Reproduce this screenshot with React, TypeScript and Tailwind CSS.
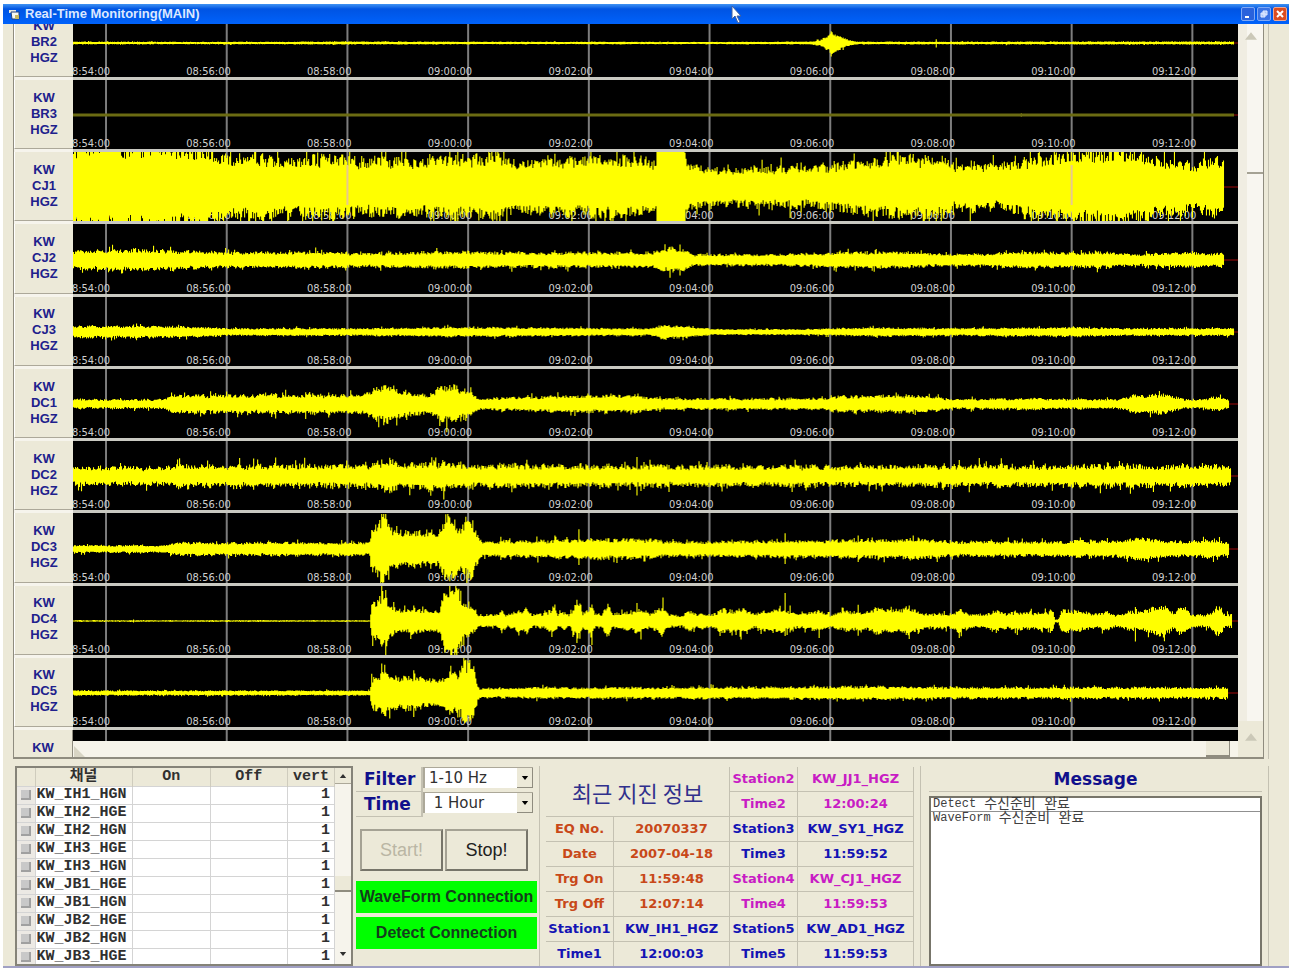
import { useState } from 'react';

type Point = [number, number];

interface IChannel {
  station: string;
  env: Point[];
  end: number;
  spikes?: Point[];
  rough?: number;
  color?: string;
  ghost?: boolean;
}

const PLOT_WIDTH = 1164;
const MID = 36;

const TICKS = [
  '08:54:00',
  '08:56:00',
  '08:58:00',
  '09:00:00',
  '09:02:00',
  '09:04:00',
  '09:06:00',
  '09:08:00',
  '09:10:00',
  '09:12:00',
];

const tickX = (i: number) => 33 + i * 120.6;
const pct = (x: number) => `${(x / PLOT_WIDTH) * 100}%`;

// env: [x, amplitude] key points of the envelope, spikes: single tall peaks
const channels: IChannel[] = [
  {
    station: 'BR2',
    end: 1160,
    env: [[0, 1.6], [110, 1.2], [270, 1.5], [620, 1.2], [735, 1.4], [745, 3], [753, 7], [758, 12], [763, 8], [770, 5], [782, 1.4], [1164, 1.6]],
    spikes: [[757, 15], [758, 14], [759, 12], [862, 4]],
  },
  { station: 'BR3', end: 1160, env: [[0, 1.4], [1164, 1.4]], rough: 0, color: '#6b6b12', spikes: [[947, 2]] },
  {
    station: 'CJ1',
    end: 1150,
    rough: 0.38,
    ghost: true,
    env: [[0, 50], [70, 48], [130, 42], [155, 36], [200, 33], [260, 33], [290, 29], [350, 31], [400, 35], [430, 37], [450, 28], [500, 31], [530, 34], [582, 29], [583, 60], [608, 60], [612, 30], [616, 22], [680, 21], [740, 22], [790, 27], [830, 32], [865, 33], [880, 25], [930, 23], [950, 31], [985, 38], [1020, 41], [1060, 38], [1090, 31], [1115, 25], [1130, 29], [1150, 31]],
    spikes: [[727, 30], [817, 32], [755, 28]],
  },
  {
    station: 'CJ2',
    end: 1150,
    env: [[0, 10], [60, 11], [100, 10], [160, 8], [240, 9], [290, 7], [380, 9], [440, 8], [580, 8], [595, 13], [610, 12], [620, 6], [700, 6], [760, 8], [830, 9], [880, 6], [940, 8], [1020, 9], [1070, 6], [1100, 8], [1150, 7]],
    spikes: [[24, 15], [100, 13]],
  },
  {
    station: 'CJ3',
    end: 1160,
    env: [[0, 6], [110, 6], [160, 4], [300, 4], [380, 5], [580, 4], [588, 8], [600, 7], [640, 3], [720, 3], [800, 5], [880, 4], [1000, 5], [1060, 4], [1160, 4]],
  },
  {
    station: 'DC1',
    end: 1155,
    env: [[0, 5], [90, 5], [98, 10], [200, 10], [290, 10], [302, 19], [314, 22], [325, 14], [355, 10], [366, 18], [378, 20], [388, 14], [397, 14], [405, 6], [500, 9], [560, 9], [590, 6], [740, 6], [770, 9], [850, 9], [880, 5], [940, 6], [1045, 5], [1060, 10], [1095, 10], [1110, 5], [1130, 5], [1142, 8], [1155, 4]],
    spikes: [[373, 24], [305, 19], [312, 23], [137, 16], [198, 14], [232, 15]],
  },
  {
    station: 'DC2',
    end: 1157,
    rough: 0.45,
    env: [[0, 10], [90, 10], [100, 12], [280, 12], [300, 14], [314, 18], [330, 13], [370, 15], [390, 13], [560, 11], [566, 13], [590, 11], [1157, 12]],
    spikes: [[563, 21], [567, 19], [570, 17], [180, 17], [226, 16], [259, 17], [447, 15], [304, 19]],
  },
  {
    station: 'DC3',
    end: 1155,
    env: [[0, 4], [90, 4], [105, 7], [296, 7], [298, 22], [306, 34], [312, 36], [317, 22], [330, 19], [365, 18], [369, 32], [380, 30], [388, 21], [398, 34], [404, 16], [408, 8], [500, 10], [560, 11], [600, 8], [740, 9], [840, 11], [880, 8], [960, 8], [1040, 9], [1066, 13], [1080, 10], [1110, 8], [1140, 10], [1155, 7]],
    spikes: [[307, 34], [374, 34], [505, 20], [427, 14], [711, 17], [784, 15]],
  },
  {
    station: 'DC4',
    end: 1158,
    rough: 0.36,
    env: [[0, 0.8], [296, 0.8], [298, 20], [304, 24], [310, 32], [314, 20], [325, 13], [366, 13], [370, 34], [382, 40], [388, 22], [400, 12], [405, 7], [425, 7], [428, 12], [432, 7], [448, 12], [453, 14], [458, 7], [474, 9], [479, 17], [484, 8], [490, 10], [495, 7], [504, 20], [509, 7], [517, 17], [522, 8], [528, 7], [534, 17], [539, 7], [560, 11], [568, 14], [575, 8], [588, 15], [594, 8], [608, 6], [616, 11], [622, 7], [640, 9], [650, 13], [660, 10], [668, 13], [680, 7], [705, 14], [728, 7], [745, 12], [756, 7], [765, 11], [790, 9], [806, 16], [820, 11], [835, 15], [850, 8], [865, 9], [874, 7], [886, 14], [895, 7], [912, 8], [922, 12], [932, 8], [942, 10], [960, 8], [978, 12], [981, 2], [984, 2], [987, 12], [1010, 10], [1018, 7], [1030, 10], [1046, 6], [1058, 12], [1066, 9], [1080, 15], [1090, 17], [1098, 9], [1108, 15], [1118, 7], [1136, 7], [1144, 17], [1152, 7], [1158, 7]],
    spikes: [[309, 35], [312, 35], [371, 34], [377, 36], [380, 36], [503, 22], [506, 22], [518, 20], [589, 18], [533, 17], [711, 20], [784, 21], [887, 15], [1061, 21], [60, 2]],
  },
  {
    station: 'DC5',
    end: 1154,
    env: [[0, 2.6], [296, 2.6], [298, 15], [310, 22], [320, 18], [345, 18], [365, 14], [380, 22], [386, 20], [392, 38], [398, 36], [402, 14], [406, 5], [470, 6], [600, 6], [800, 7], [900, 6], [1154, 6]],
    spikes: [[311, 31], [312, 33], [386, 30], [393, 34], [395, 35]],
  },
];

function envelopeAt(env: Point[], x: number) {
  for (let i = 1; i < env.length; i++) {
    const [x0, a0] = env[i - 1];
    const [x1, a1] = env[i];
    if (x <= x1) return a0 + ((a1 - a0) * (x - x0)) / (x1 - x0);
  }
  return env[env.length - 1][1];
}

function tracePath(channel: IChannel, seed: number) {
  const rough = channel.rough ?? 0.36;
  let s = seed * 7919 + 17;
  const rand = () => {
    s = (s * 16807) % 2147483647;
    return s / 2147483647;
  };
  let swell = 1;
  const side = (amp: number) => {
    const peak = rand() > 0.94 ? 1 + rough : 1;
    return Math.min(35, Math.max(0.5, amp * swell * peak * (1 - rough * rand())));
  };
  const tall = new Map(channel.spikes ?? []);
  let d = '';
  for (let x = 0; x < channel.end; x++) {
    if (x % 4 === 0) swell = 1 - rough * 0.3 + rough * 0.6 * rand();
    const amp = tall.get(x) ?? envelopeAt(channel.env, x);
    d += `M${x + 0.5} ${(MID - side(amp)).toFixed(1)}V${(MID + side(amp)).toFixed(1)}`;
  }
  return d;
}

const traces = channels.map((channel, i) => tracePath(channel, i + 1));

const GridLines = () => (
  <>
    {TICKS.map((tick, i) => (
      <line key={tick} x1={pct(tickX(i))} x2={pct(tickX(i))} y1="0" y2="100%" stroke="#7d7d7d" strokeWidth="2" />
    ))}
  </>
);

const Plot = ({ channel, path }: { channel: IChannel; path: string }) => (
  <div className="flex min-h-0 items-end overflow-hidden border-b-3 border-[#c9c9c1] bg-black">
    <svg className="h-[70px] w-full shrink-0" role="img" aria-label={`KW ${channel.station} HGZ`}>
      <GridLines />
      {TICKS.map((tick, i) => (
        <text key={tick} x={pct(tickX(i) + 4)} y="68" textAnchor="end" fill="#cfcfcf" className="font-['DejaVu_Sans_Condensed','Liberation_Sans',sans-serif] text-[11px]">
          {tick}
        </text>
      ))}
      <line x1={pct(channel.end)} x2="100%" y1={MID} y2={MID} stroke="#a00808" />
      <svg width="100%" height="100%" viewBox={`0 0 ${PLOT_WIDTH} 70`} preserveAspectRatio="none">
        <path d={path} stroke={channel.color ?? '#ffff00'} strokeWidth="1.1" fill="none" />
      </svg>
      {channel.ghost &&
        [2, 8].map((i) => (
          <line key={i} x1={pct(tickX(i))} x2={pct(tickX(i))} y1="14" y2="54" stroke="#e8c890" strokeWidth="2" />
        ))}
    </svg>
  </div>
);

const StationLabel = ({ station }: { station: string }) => (
  <div className="flex min-h-0 flex-col justify-end overflow-hidden">
    <div className="flex h-[70px] shrink-0 flex-col items-center justify-center border-b border-l border-b-[#aca899] border-l-white text-[13px] leading-4 font-bold text-[#20208c]">
      <span>KW</span>
      <span>{station}</span>
      <span>HGZ</span>
    </div>
    <div className="h-[3px] shrink-0 bg-[#f6f4ec]" />
  </div>
);

const Arrow = ({ dir, className }: { dir: 'up' | 'down'; className: string }) => (
  <svg viewBox="0 0 8 5" className={className} aria-hidden="true">
    <path d={dir === 'up' ? 'M0 5 4 0 8 5z' : 'M0 0h8L4 5z'} fill="currentColor" />
  </svg>
);

const TitleBar = () => (
  <header className="relative flex h-5 shrink-0 items-center bg-linear-to-b from-[#3f92f2] via-[#0054e3] via-25% to-[#0062fb] pr-0.5 pl-1">
    <svg viewBox="0 0 14 14" className="size-3.5" aria-hidden="true">
      <path d="M2 3h7v3H2z" fill="#e8e8e0" />
      <path d="M4 5h8v7H5z" fill="#f8f8f0" stroke="#204080" />
      <path d="M8 8h4v4H8z" fill="#c8b860" />
    </svg>
    <h1 className="ml-1 text-[13px] leading-5 font-bold text-[#dbe8ff]">Real-Time Monitoring(MAIN)</h1>
    <div className="ml-auto flex gap-0.5">
      <button type="button" aria-label="Minimize" className="size-3.5 rounded-xs border border-[#7fa8f4] bg-[#2a62dc]">
        <svg viewBox="0 0 12 12" aria-hidden="true">
          <path d="M3 9h4" stroke="#fff" strokeWidth="2" />
        </svg>
      </button>
      <button type="button" aria-label="Restore" className="size-3.5 rounded-xs border border-[#7fa8f4] bg-[#3a72e4]">
        <svg viewBox="0 0 12 12" aria-hidden="true">
          <path d="M5 3h4v4H5zM3 5h4v4H3z" fill="#a8c4f8" stroke="#e4ecff" />
        </svg>
      </button>
      <button type="button" aria-label="Close" className="size-3.5 rounded-xs border border-[#f0a890] bg-[#dc4c20]">
        <svg viewBox="0 0 12 12" aria-hidden="true">
          <path d="m3 3 6 6M9 3 3 9" stroke="#fff" strokeWidth="2" />
        </svg>
      </button>
    </div>
    {/* mouse pointer */}
    <svg viewBox="0 0 12 20" className="absolute top-px left-[728px] z-10 h-5 w-3" aria-hidden="true">
      <path d="M1 1v13l3-3 3 7 2-1-3-6h4z" fill="#fff" stroke="#4060a0" />
    </svg>
  </header>
);

const rowsGrid = 'grid-rows-[56px_repeat(9,minmax(0,1fr))_11px]';
const labelGrid = 'grid-rows-[56px_repeat(9,minmax(0,1fr))_27px]';

const Monitor = () => (
  <section className="mr-5 flex min-h-0 flex-1 border-r border-[#c4c1b2] pr-1 pl-2.5">
    <div className="flex min-w-0 flex-1 border-x border-b-2 border-[#8f8c7f]">
      <div className={`grid w-[59px] shrink-0 ${labelGrid}`}>
        {channels.map((channel) => (
          <StationLabel key={channel.station} station={channel.station} />
        ))}
        <div className="border-r border-[#8f8c7f] pt-2.5 text-center text-[13px] leading-4 font-bold text-[#20208c]">KW</div>
      </div>
      <div className="flex min-w-0 flex-1 flex-col">
        <div className={`grid min-h-0 flex-1 ${rowsGrid}`}>
          {channels.map((channel, i) => (
            <Plot key={channel.station} channel={channel} path={traces[i]} />
          ))}
          <svg className="h-full w-full bg-black">
            <GridLines />
          </svg>
        </div>
        <div className="flex h-4 shrink-0 items-end bg-[#f6f4ea]">
          <svg viewBox="0 0 12 12" className="mr-auto size-3" aria-hidden="true">
            <path d="M1 1v11h11z" fill="#d8d5c4" />
          </svg>
          <div className="mr-2 h-4 w-6 border-r border-b-2 border-[#8f8c7f] bg-[#ece9d8]" />
        </div>
      </div>
      <div className="flex w-[25px] shrink-0 flex-col items-end bg-[#f0ede2] text-[#cbc8b8]">
        <div className="flex h-[150px] w-4 justify-center border-b-2 border-[#a5a294] bg-[#f8f6f0] pt-2">
          <Arrow dir="up" className="mr-2 h-2 w-3 shrink-0" />
        </div>
        <div className="w-4 flex-1 bg-[#f8f6f0]" />
        <div className="flex h-9 w-full justify-center bg-[#ece9d8] pt-3">
          <Arrow dir="up" className="h-2 w-3" />
        </div>
      </div>
    </div>
  </section>
);

const gridRows = [
  'KW_IH1_HGN',
  'KW_IH2_HGE',
  'KW_IH2_HGN',
  'KW_IH3_HGE',
  'KW_IH3_HGN',
  'KW_JB1_HGE',
  'KW_JB1_HGN',
  'KW_JB2_HGE',
  'KW_JB2_HGN',
  'KW_JB3_HGE',
];

const ChannelGrid = () => (
  <div className="flex h-[200px] w-[338px] shrink-0 overflow-hidden border-2 border-[#858378] bg-white font-['Liberation_Mono','Noto_Sans_CJK_KR',monospace] text-[15px] font-bold text-[#303030]">
    <table className="flex-1 table-fixed border-collapse">
      <thead>
        <tr className="h-[18px] bg-[#ece9d8] leading-4">
          <th className="w-[18px] border-r border-[#cfccbd]" aria-label="Row" />
          <th className="w-[97px] border-r border-[#cfccbd]">채널</th>
          <th className="w-[78px] border-r border-[#cfccbd]">On</th>
          <th className="w-[77px] border-r border-[#cfccbd]">Off</th>
          <th className="w-[47px] border-r border-[#cfccbd]">vert</th>
        </tr>
      </thead>
      <tbody>
        {gridRows.map((name) => (
          <tr key={name} className="h-[18px] leading-4">
            <td className="border border-l-0 border-[#d4d4d4] bg-[#ece9e4]">
              <div className="mx-auto h-2.5 w-2.5 border-r-2 border-b-2 border-[#a0a0a0] bg-[#c8c8c8]" />
            </td>
            <td className="border border-[#d4d4d4] pl-px">{name}</td>
            <td className="border border-[#d4d4d4]" />
            <td className="border border-[#d4d4d4]" />
            <td className="border border-[#d4d4d4] pr-1 text-right">1</td>
          </tr>
        ))}
      </tbody>
    </table>
    <div className="flex w-4 shrink-0 flex-col items-center bg-[#f6f4ec]">
      <div className="flex h-4 w-full items-center justify-center border-b border-[#aca899] bg-[#ece9d8]">
        <Arrow dir="up" className="h-1 w-2" />
      </div>
      <div className="mt-[92px] h-4 w-full border-b-2 border-[#8f8c7f] bg-[#ece9d8]" />
      <Arrow dir="down" className="mt-auto mb-2 h-1 w-2" />
    </div>
  </div>
);

interface IPicker {
  id: string;
  label: string;
  options: string[];
}

const Picker = ({ id, label, options }: IPicker) => {
  const [value, setValue] = useState(options[0]);

  return (
    <div className="flex h-[25px] items-stretch">
      <label htmlFor={id} className="w-[67px] border-r-2 border-b border-[#c4c1b2] pl-2 font-['DejaVu_Sans',sans-serif] text-[17px] leading-6 font-bold text-[#10108c]">
        {label}
      </label>
      <div className="relative mb-1 flex-1 border-t border-l-2 border-[#aca899] bg-white">
        <select
          id={id}
          value={value}
          onChange={(e) => setValue(e.target.value)}
          className="block h-5 w-full appearance-none px-1 font-['DejaVu_Sans',sans-serif] text-[15px] leading-5 whitespace-pre text-[#303030]"
        >
          {options.map((option) => (
            <option key={option}>{option}</option>
          ))}
        </select>
        <span className="pointer-events-none absolute top-0 right-0 flex h-5 w-4 items-center justify-center border-r border-b border-[#8f8c7f] bg-[#ece9d8]">
          <Arrow dir="down" className="h-1 w-2" />
        </span>
      </div>
    </div>
  );
};

const Controls = () => (
  <div className="flex w-[182px] shrink-0 flex-col pt-px pl-px">
    <div className="pr-1">
      <Picker id="filter" label="Filter" options={['1-10 Hz', '0.1-1 Hz']} />
      <Picker id="time" label="Time" options={['\u00a01 Hour', '\u00a02 Hour']} />
    </div>
    <div className="mt-3 flex gap-0.5 pl-1 text-[18px]">
      <button type="button" disabled className="h-[42px] w-[83px] border-2 border-[#77756a] border-t-[#a5a294] border-l-[#a5a294] text-[#bab6a4]">
        Start!
      </button>
      <button type="button" className="h-[42px] w-[83px] border-2 border-[#77756a] border-t-[#a5a294] border-l-[#a5a294] text-[#202020]">
        Stop!
      </button>
    </div>
    <div className="mt-2.5 flex flex-col gap-1 text-center text-[16px] leading-8 font-bold whitespace-nowrap text-[#143c1c]">
      <p className="bg-[#00ff00]">WaveForm Connection</p>
      <p className="bg-[#00ff00]">Detect Connection</p>
    </div>
  </div>
);

const ORANGE = 'text-[#c84818]';
const BLUE = 'text-[#1414b4]';
const PINK = 'text-[#c81cc4]';

const quakeRows = [
  { left: null, right: ['Station2', 'KW_JJ1_HGZ'], leftColor: '', rightColor: PINK },
  { left: null, right: ['Time2', '12:00:24'], leftColor: '', rightColor: PINK },
  { left: ['EQ No.', '20070337'], right: ['Station3', 'KW_SY1_HGZ'], leftColor: ORANGE, rightColor: BLUE },
  { left: ['Date', '2007-04-18'], right: ['Time3', '11:59:52'], leftColor: ORANGE, rightColor: BLUE },
  { left: ['Trg On', '11:59:48'], right: ['Station4', 'KW_CJ1_HGZ'], leftColor: ORANGE, rightColor: PINK },
  { left: ['Trg Off', '12:07:14'], right: ['Time4', '11:59:53'], leftColor: ORANGE, rightColor: PINK },
  { left: ['Station1', 'KW_IH1_HGZ'], right: ['Station5', 'KW_AD1_HGZ'], leftColor: BLUE, rightColor: BLUE },
  { left: ['Time1', '12:00:03'], right: ['Time5', '11:59:53'], leftColor: BLUE, rightColor: BLUE },
];

const cell = 'border-r border-b border-[#c4c1b2] p-0 text-center';

const QuakeInfo = () => (
  <div className="shrink-0 border-x border-[#c4c1b2] pt-px pr-1.5 pl-1.5">
    <table className="w-[368px] table-fixed border-separate border-spacing-0 font-['DejaVu_Sans',sans-serif] text-[13px] leading-6 font-bold">
      <colgroup>
        <col className="w-[68px]" />
        <col className="w-[116px]" />
        <col className="w-[68px]" />
        <col className="w-[116px]" />
      </colgroup>
      <tbody>
        {quakeRows.map((row, i) => (
          <tr key={row.right[0]}>
            {i === 0 && (
              <th colSpan={2} rowSpan={2} className={`${cell} font-['Noto_Sans_CJK_KR',sans-serif] text-[22px] font-normal text-[#30308c]`}>
                최근 지진 정보
              </th>
            )}
            {row.left && (
              <>
                <th className={`${cell} ${row.leftColor}`}>{row.left[0]}</th>
                <td className={`${cell} ${row.leftColor}`}>{row.left[1]}</td>
              </>
            )}
            <th className={`${cell} ${row.rightColor}`}>{row.right[0]}</th>
            <td className={`${cell} ${row.rightColor}`}>{row.right[1]}</td>
          </tr>
        ))}
      </tbody>
    </table>
  </div>
);

const messages = [
  { source: 'Detect', text: '수신준비 완료' },
  { source: 'WaveForm', text: '수신준비 완료' },
];

const MessagePanel = () => (
  <div className="mr-5 flex h-[200px] min-w-0 flex-1 flex-col border-r border-[#c4c1b2] pt-px pr-1.5 pl-1.5">
    <h2 className="border-b border-[#c4c1b2] text-center font-['DejaVu_Sans',sans-serif] text-[17px] leading-6 font-bold text-[#10108c]">Message</h2>
    <ul className="mt-1 flex-1 border-2 border-[#77756a] bg-white font-['Liberation_Mono','Noto_Sans_CJK_KR',monospace] text-[12px] leading-3 text-[#404040]">
      {messages.map((message, i) => (
        <li key={message.source} className={`flex h-3.5 gap-2 pl-0.5 whitespace-nowrap ${i === 0 ? 'border-b border-[#909090]' : ''}`}>
          <span>{message.source}</span>
          <span className="text-[14px]">{message.text}</span>
        </li>
      ))}
    </ul>
  </div>
);

export default function App() {
  return (
    <div className="h-screen overflow-hidden bg-white pt-1 pr-1 pb-1 pl-[3px] font-['Liberation_Sans',Arial,sans-serif]">
      <main className="flex h-full flex-col overflow-hidden border-b-2 border-[#a0a0c4] bg-[#ece9d8]">
        <TitleBar />
        <Monitor />
        <section className="flex h-[207px] shrink-0 items-start gap-0.5 overflow-hidden pt-[7px] pl-3">
          <ChannelGrid />
          <Controls />
          <QuakeInfo />
          <MessagePanel />
        </section>
      </main>
    </div>
  );
}
